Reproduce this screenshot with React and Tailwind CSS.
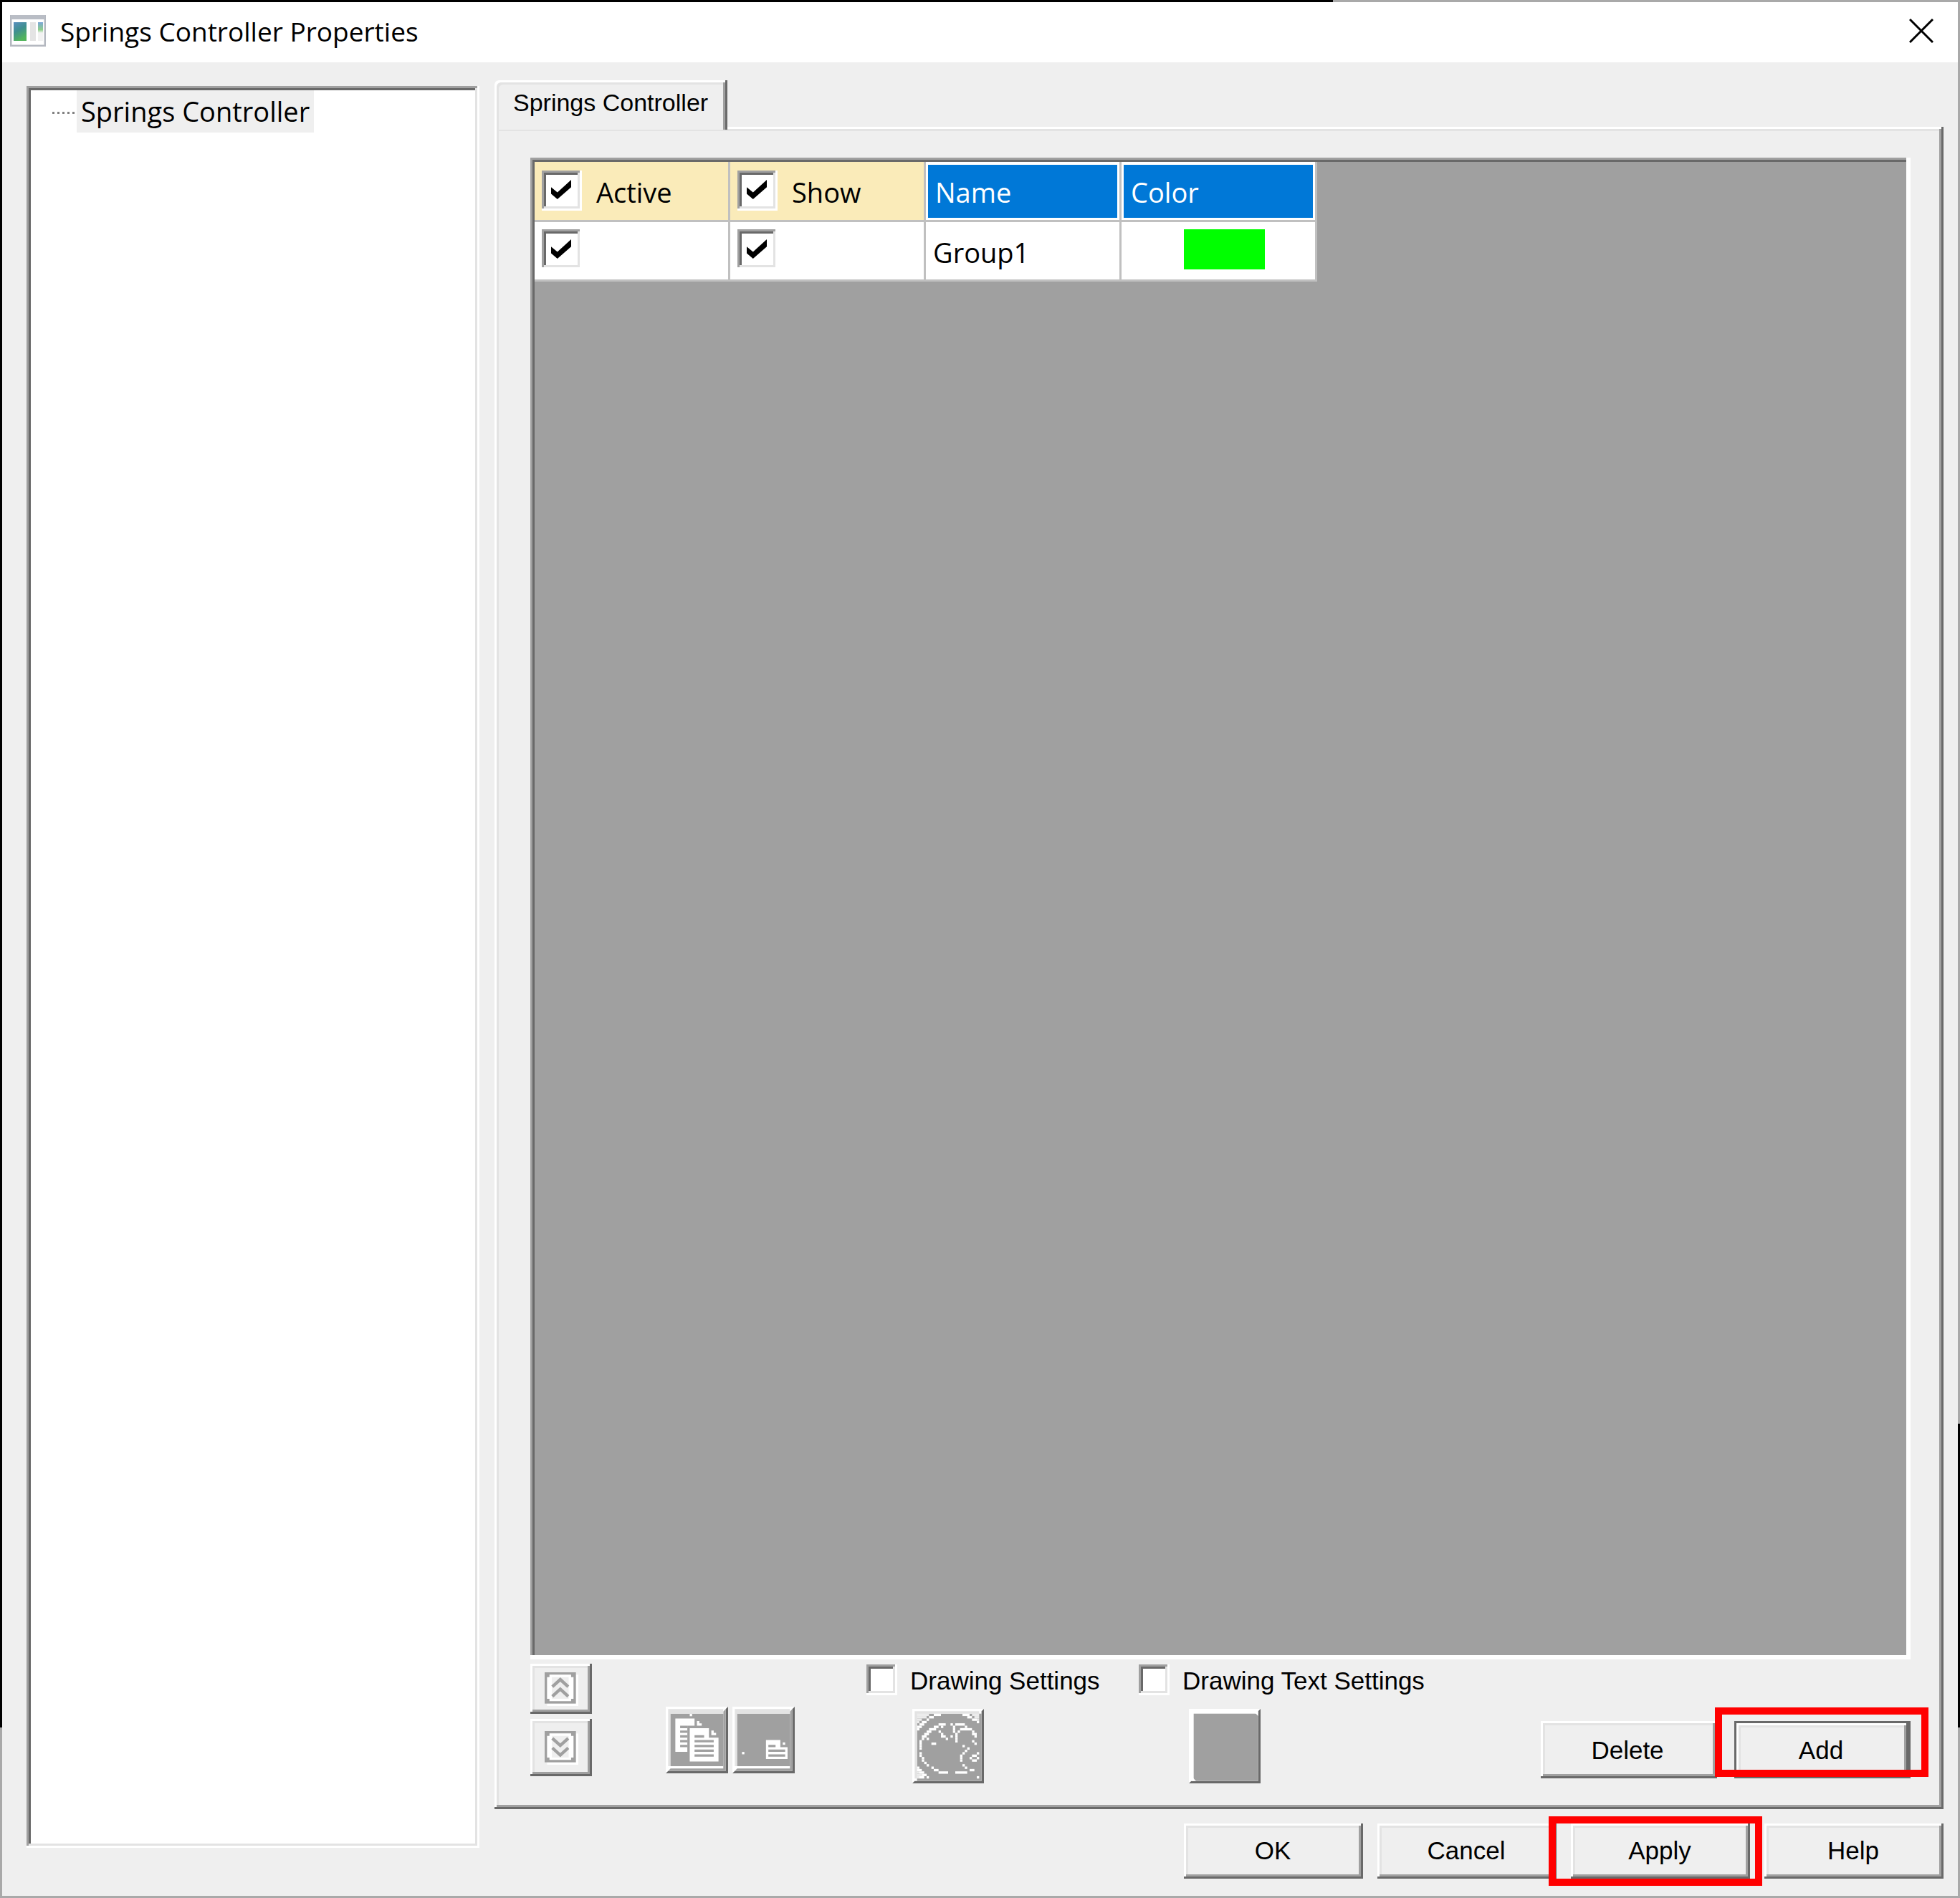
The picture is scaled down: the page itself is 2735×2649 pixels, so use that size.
const RAISED =
  "shadow-[inset_-3px_-3px_0_#696969,inset_3px_3px_0_#ffffff,inset_-6px_-6px_0_#a0a0a0,inset_6px_6px_0_#e3e3e3]";
const SUNKEN =
  "shadow-[inset_-3px_-3px_0_#ffffff,inset_3px_3px_0_#a0a0a0,inset_-6px_-6px_0_#e3e3e3,inset_6px_6px_0_#696969]";

/* Each entry is [row, first column, last column]. */
const PALETTE_LIGHT = [
  [2, 2, 6], [2, 25, 27], [3, 2, 5], [3, 26, 27], [4, 2, 3], [4, 27, 27], [5, 2, 2],
  [26, 2, 2], [27, 2, 3], [28, 2, 2],
];
const PALETTE_WHITE = [
  [2, 9, 11], [2, 21, 23], [3, 7, 8], [3, 23, 24], [4, 6, 6], [4, 25, 26], [5, 4, 5], [5, 27, 27],
  [6, 3, 4], [6, 11, 13], [6, 16, 16], [6, 18, 21],
  [7, 2, 3], [7, 9, 10], [7, 12, 12], [7, 17, 17], [7, 22, 22],
  [8, 2, 2], [8, 7, 9], [8, 17, 17], [8, 20, 24],
  [9, 6, 7], [9, 11, 11], [9, 17, 17], [9, 19, 19], [9, 25, 25],
  [10, 5, 6], [10, 12, 12], [10, 18, 18], [10, 25, 26],
  [11, 4, 5], [11, 12, 13], [11, 16, 16], [11, 18, 18], [11, 26, 26],
  [12, 4, 4], [12, 6, 6], [12, 14, 14], [12, 18, 18],
  [13, 3, 3], [13, 18, 18], [13, 25, 25],
  [14, 3, 3], [14, 8, 9], [14, 26, 26],
  [15, 3, 3], [15, 21, 21], [16, 3, 3], [16, 23, 23], [17, 22, 22],
  [18, 3, 3], [18, 21, 21], [18, 27, 27], [19, 3, 3], [19, 20, 20], [19, 25, 26],
  [20, 4, 4], [20, 20, 20], [20, 24, 24], [20, 27, 27], [21, 4, 4], [21, 20, 20], [21, 25, 26],
  [22, 5, 5], [23, 6, 6], [23, 21, 21],
  [24, 2, 2], [24, 8, 8], [24, 22, 22], [25, 2, 3], [25, 9, 10], [25, 24, 25],
  [26, 3, 4], [26, 11, 14], [26, 18, 22], [27, 4, 5], [28, 3, 4], [28, 6, 6], [28, 27, 27],
];

function Pixels({ runs, fill }) {
  return runs.map(([y, a, b]) => (
    <rect key={`${y}-${a}`} x={a} y={y} width={b - a + 1} height="1" fill={fill} />
  ));
}

function PaletteIcon() {
  return (
    <svg viewBox="0 0 30 31" preserveAspectRatio="none" className="block h-full w-full" aria-hidden="true">
      <rect width="30" height="31" fill="#fff" />
      <path d="M30 0V31H0L1 30H29V1Z" fill="#696969" />
      <rect x="2" y="2" width="27" height="28" fill="#a0a0a0" />
      <path d="M1 1H28V2H2V29H1Z" fill="#e3e3e3" />
      <Pixels runs={PALETTE_LIGHT} fill="#ececec" />
      <Pixels runs={PALETTE_WHITE} fill="#fff" />
    </svg>
  );
}

function SwatchIcon() {
  return (
    <svg viewBox="0 0 30 31" preserveAspectRatio="none" className="block h-full w-full" aria-hidden="true">
      <rect width="30" height="31" fill="#fff" />
      <path d="M30 0V31H0L1 30H29V1Z" fill="#696969" />
      <rect x="2" y="2" width="27" height="28" fill="#a0a0a0" />
      <path d="M1 28V30H3L2 29ZM27 1H29V3Z" fill="#fff" />
    </svg>
  );
}

function ToolFrame({ children }) {
  return (
    <svg viewBox="0 0 26 28" preserveAspectRatio="none" className="block h-full w-full" aria-hidden="true">
      <rect width="26" height="28" fill="#fff" />
      <path d="M26 0V28H0L1 27H25V1Z" fill="#696969" />
      <path d="M25 1V27H1L2 26H24V2Z" fill="#a0a0a0" />
      <path d="M1 1H24V3H2V25H1Z" fill="#e3e3e3" />
      <rect x="2" y="3" width="22" height="22" fill="#a0a0a0" />
      {children}
    </svg>
  );
}

function CopyIcon() {
  return (
    <ToolFrame>
      <rect x="10" y="3" width="1" height="1" fill="#fff" />
      <path d="M4 5H12V8H9V19H4Z" fill="#fff" />
      <path d="M13 6H14V7H15V8H13Z" fill="#fff" />
      <path d="M6 8H9V9H6ZM6 10H9V11H6ZM6 12H9V13H6ZM6 14H9V15H6ZM6 16H9V17H6Z" fill="#a0a0a0" />
      <path d="M10 9H18V13H22V23H10Z" fill="#fff" />
      <path d="M19 10H20V11H21V12H19Z" fill="#fff" />
      <path d="M12 12H16V13H12ZM12 14H20V15H12ZM12 16H20V17H12ZM12 18H20V19H12ZM12 20H20V21H12Z" fill="#a0a0a0" />
    </ToolFrame>
  );
}

function PasteIcon() {
  return (
    <ToolFrame>
      <rect x="4" y="19" width="1" height="1" fill="#fff" />
      <path d="M14 14H20V17H23V22H14Z" fill="#fff" />
      <rect x="21" y="15" width="1" height="1" fill="#fff" />
      <path d="M15 16H18V17H15ZM15 18H22V19H15ZM15 20H22V21H15Z" fill="#a0a0a0" />
    </ToolFrame>
  );
}

function ChevronsIcon({ down }) {
  return (
    <svg viewBox="0 0 14 14" className="block size-[47px]" aria-hidden="true">
      <rect x="1" y="1" width="13" height="13" fill="#fff" />
      <rect width="13" height="13" fill="#a0a0a0" />
      <path d="M2 1H11V2H12V11H11V12H2V11H1V2H2Z" fill="#fff" />
      <rect x="3" y="2" width="7" height="9" fill="#efefef" />
      <path
        d={down ? "M3.2 3L6.5 6L9.8 3M3.2 7L6.5 10L9.8 7" : "M3.2 6L6.5 3L9.8 6M3.2 10L6.5 7L9.8 10"}
        fill="none"
        stroke="#a0a0a0"
        strokeWidth="1.3"
      />
    </svg>
  );
}

function AppIcon() {
  return (
    <svg viewBox="0 0 50 44" className="block h-[44px] w-[50px]" aria-hidden="true">
      <defs>
        <linearGradient id="pane" x1="0" y1="0" x2="0.4" y2="1">
          <stop offset="0" stopColor="#5b8fc0" />
          <stop offset="0.5" stopColor="#3f8f8f" />
          <stop offset="1" stopColor="#52b45c" />
        </linearGradient>
        <linearGradient id="side" x1="0" y1="0" x2="0" y2="1">
          <stop offset="0" stopColor="#7aa6d8" />
          <stop offset="0.7" stopColor="#8fcf8a" />
          <stop offset="1" stopColor="#f4f4f4" />
        </linearGradient>
      </defs>
      <rect x="1" y="1" width="48" height="42" fill="#fff" stroke="#b4b8c0" strokeWidth="3" />
      <rect x="1" y="0" width="48" height="6" fill="#b9bdc5" />
      <rect x="5" y="10" width="18" height="26" fill="url(#pane)" />
      <rect x="28" y="10" width="8" height="26" fill="#e4e4e4" />
      <rect x="39" y="10" width="7" height="15" fill="url(#side)" />
      <rect x="39" y="25" width="7" height="11" fill="#f2f2f2" />
    </svg>
  );
}

function GridCheck({ id, label }) {
  return (
    <span className="grid size-[56px] shrink-0 place-items-center">
      <input
        id={id}
        type="checkbox"
        defaultChecked
        aria-label={label}
        className={`peer col-start-1 row-start-1 size-full appearance-none bg-white ${SUNKEN}`}
      />
      <svg
        viewBox="0 0 7 8"
        preserveAspectRatio="none"
        className="pointer-events-none invisible col-start-1 row-start-1 mr-[2px] mb-[2px] h-[27px] w-[28px] peer-checked:visible"
        aria-hidden="true"
      >
        <path d="M0 3L2.2 5.2L7 0V3L2.2 8L0 5.8Z" fill="#000" />
      </svg>
    </span>
  );
}

function Setting({ id, label, children }) {
  return (
    <div className="w-[380px] pt-[6px]">
      <div className="flex h-[45px] items-center gap-[18px]">
        <input id={id} type="checkbox" className={`size-[43px] shrink-0 appearance-none bg-white ${SUNKEN}`} />
        <label htmlFor={id} className="pt-[2px] whitespace-nowrap">{label}</label>
      </div>
      <div className="mt-[18px] flex pl-[64px]">{children}</div>
    </div>
  );
}

function DialogButton({ children }) {
  return (
    <button type="button" className={`h-[77px] w-[250px] bg-[#efefef] pr-[2px] pb-[2px] ${RAISED}`}>
      {children}
    </button>
  );
}

function Highlight({ className }) {
  return (
    <span className={`pointer-events-none absolute z-10 h-[97px] w-[298px] border-10 border-[#ff0000] ${className}`} />
  );
}

const CELL = "border-r-3 border-b-3 border-[#c0c0c0] p-0 font-normal text-left";

export default function App() {
  return (
    <div className="flex h-screen flex-col bg-[#a9a9a9] bg-[linear-gradient(to_right,#000_68%,#a9a9a9_68%),linear-gradient(#000_91%,#a9a9a9_91%),linear-gradient(#a9a9a9_75%,#000_75%,#000_91%,#a9a9a9_91%)] bg-[size:100%_3px,3px_100%,3px_100%] bg-[position:top_left,top_left,top_right] bg-no-repeat p-[3px] font-['Liberation_Sans',sans-serif] text-[35px] leading-[43px] text-black">
      <header className="flex h-[84px] shrink-0 items-center bg-white pr-[32px] pb-[4px] pl-[11px] font-['Open_Sans','Noto_Sans',sans-serif] text-[37px]">
        <AppIcon />
        <h1 className="ml-[20px] flex-1">Springs Controller Properties</h1>
        <button type="button" aria-label="Close" className="p-[2px]">
          <svg viewBox="0 0 34 34" className="block size-[34px]" aria-hidden="true">
            <path d="M1 1L33 33M33 1L1 33" stroke="#000" strokeWidth="3" />
          </svg>
        </button>
      </header>

      <div className="flex min-h-0 flex-1 gap-[21px] bg-[#efefef] pr-5 pl-[34px]">
        <nav
          aria-label="Sections"
          className={`mt-[33px] mb-[67px] w-[632px] shrink-0 bg-white p-[6px] font-['Open_Sans','Noto_Sans',sans-serif] text-[38px] ${SUNKEN}`}
        >
          <div className="flex items-center pl-[30px]">
            <svg viewBox="0 0 31 3" className="mt-1 h-[3px] w-[31px]" aria-hidden="true">
              <path d="M0 1.5H31" stroke="#808080" strokeWidth="3" strokeDasharray="3 4" />
            </svg>
            <a href="#springs" className="ml-[3px] bg-[#efefef] px-[6px] py-2">Springs Controller</a>
          </div>
        </nav>

        <main className="flex min-w-0 flex-1 flex-col pt-[25px]">
          <div role="tablist" className="relative z-10 -mb-[4px] flex">
            <button
              type="button"
              role="tab"
              aria-selected="true"
              className="flex h-[69px] w-[325px] items-start rounded-tl-[6px] bg-[#efefef] pt-[10px] pl-[26px] text-[34px] whitespace-nowrap shadow-[inset_-3px_0_0_#696969,inset_3px_3px_0_#ffffff,inset_-6px_0_0_#a0a0a0,inset_6px_6px_0_#e3e3e3]"
            >
              Springs Controller
            </button>
          </div>

          <section className={`flex min-h-0 flex-1 flex-col pt-[43px] pr-[46px] pl-[50px] ${RAISED}`}>
            <div className="min-h-0 flex-1 bg-[#a0a0a0] p-[6px] font-['Open_Sans','Noto_Sans',sans-serif] text-[38px] shadow-[inset_-6px_-6px_0_#ffffff,inset_3px_3px_0_#a0a0a0,inset_6px_6px_0_#696969]">
              <table className="table-fixed border-separate border-spacing-0 bg-white">
                <thead>
                  <tr className="h-[84px]">
                    <th className={`w-[273px] bg-[#faebb9] ${CELL}`}>
                      <div className="flex items-center pb-[2px] pl-[10px]">
                        <GridCheck id="active-all" />
                        <label htmlFor="active-all" className="ml-5 pt-[6px]">Active</label>
                      </div>
                    </th>
                    <th className={`w-[273px] bg-[#faebb9] ${CELL}`}>
                      <div className="flex items-center pb-[2px] pl-[10px]">
                        <GridCheck id="show-all" />
                        <label htmlFor="show-all" className="ml-5 pt-[6px]">Show</label>
                      </div>
                    </th>
                    <th className={`w-[273px] ${CELL}`}>
                      <div className="m-[3px] flex h-[74px] items-center bg-[#0078d7] pt-1 pl-[10px] text-white">Name</div>
                    </th>
                    <th className={`w-[273px] ${CELL}`}>
                      <div className="m-[3px] flex h-[74px] items-center bg-[#0078d7] pt-1 pl-[10px] text-white">Color</div>
                    </th>
                  </tr>
                </thead>
                <tbody>
                  <tr className="h-[83px]">
                    <td className={CELL}>
                      <div className="pb-[4px] pl-[10px]"><GridCheck id="active-1" label="Group1 active" /></div>
                    </td>
                    <td className={CELL}>
                      <div className="pb-[4px] pl-[10px]"><GridCheck id="show-1" label="Group1 show" /></div>
                    </td>
                    <td className={CELL}>
                      <div className="pt-1 pl-[10px]">Group1</div>
                    </td>
                    <td className={CELL}>
                      <div className="pb-[4px] pl-[87px]">
                        <button type="button" aria-label="Group1 color" className="block h-[56px] w-[113px] bg-[#00ff00]" />
                      </div>
                    </td>
                  </tr>
                </tbody>
              </table>
            </div>

            <div className="flex h-[209px] shrink-0 items-start">
              <div className="flex flex-col gap-[7px] pt-[6px]">
                <button type="button" aria-label="Move up" className={`flex h-[70px] w-[86px] items-center justify-center bg-[#efefef] ${RAISED}`}>
                  <ChevronsIcon />
                </button>
                <button type="button" aria-label="Move down" className={`flex h-[80px] w-[86px] items-center justify-center bg-[#efefef] ${RAISED}`}>
                  <ChevronsIcon down />
                </button>
              </div>
              <div className="mr-[100px] ml-[103px] flex gap-[6px] pt-[66px]">
                <button type="button" aria-label="Copy" className="h-[93px] w-[87px]"><CopyIcon /></button>
                <button type="button" aria-label="Paste" className="h-[93px] w-[87px]"><PasteIcon /></button>
              </div>
              <Setting id="drawing" label="Drawing Settings">
                <button type="button" aria-label="Drawing options" className="h-[104px] w-[100px]">
                  <PaletteIcon />
                </button>
              </Setting>
              <Setting id="drawing-text" label="Drawing Text Settings">
                <button type="button" aria-label="Drawing text options" className="ml-[6px] h-[104px] w-[100px]">
                  <SwatchIcon />
                </button>
              </Setting>
              <div className="ml-auto flex gap-6 pt-[86px]">
                <button type="button" className={`h-[80px] w-[246px] bg-[#efefef] pr-[4px] ${RAISED}`}>Delete</button>
                <div className="relative">
                  <button
                    type="button"
                    className="h-[80px] w-[246px] bg-[#efefef] pr-[4px] shadow-[inset_0_0_0_3px_#696969,inset_-6px_-6px_0_#696969,inset_6px_6px_0_#ffffff,inset_-9px_-9px_0_#a0a0a0,inset_9px_9px_0_#e3e3e3]"
                  >
                    Add
                  </button>
                  <Highlight className="-top-[19px] -left-[27px]" />
                </div>
              </div>
            </div>
          </section>

          <footer className="flex justify-end gap-5 pt-5 pb-6">
            <DialogButton>OK</DialogButton>
            <DialogButton>Cancel</DialogButton>
            <div className="relative">
              <DialogButton>Apply</DialogButton>
              <Highlight className="-top-[10px] -left-[31px]" />
            </div>
            <DialogButton>Help</DialogButton>
          </footer>
        </main>
      </div>
    </div>
  );
}
